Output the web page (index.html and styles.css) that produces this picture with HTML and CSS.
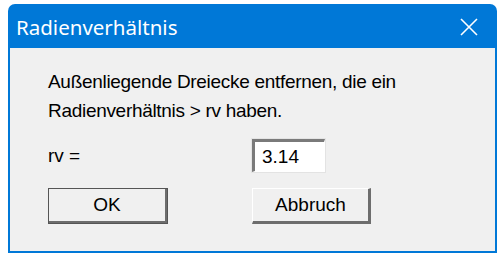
FILE: index.html
```html
<!DOCTYPE html>
<html lang="de">
<head>
  <meta charset="UTF-8" />
  <title>Radienverhältnis</title>
  <link rel="stylesheet" href="styles.css">
</head>
<body>
  <div class="dialog">
    <div class="titlebar">
      <span class="title">Radienverhältnis</span>
      <svg class="close" width="18" height="18" viewBox="0 0 18 18">
        <path d="M1 1 L17 17 M17 1 L1 17" stroke="#fff" stroke-width="1.6" fill="none" />
      </svg>
    </div>
    <div class="dialog-body">
      <p class="msg">Außenliegende Dreiecke entfernen, die ein<br>Radienverhältnis &gt; rv haben.</p>
      <div class="row">
        <label for="rv">rv =</label>
        <input type="text" id="rv" value="3.14">
      </div>
      <div class="row buttons">
        <button class="btn default" type="button">OK</button>
        <button class="btn" type="button">Abbruch</button>
      </div>
    </div>
  </div>
</body>
</html>
```

FILE: styles.css
```css
/* Base */
* {
  margin: 0;
  padding: 0;
  box-sizing: border-box;
}
body {
  background: #fff;
  font-family: 'Liberation Sans', Arial, sans-serif;
  color: #000;
}
/* Dialog window */
.dialog {
  margin: 4px 0 0 8px;
  width: 489px;
  height: 249px;
  display: flex;
  flex-direction: column;
}
.titlebar {
  height: 44px;
  background: #0078d7;
  border-radius: 7px 7px 0 0;
  display: flex;
  align-items: center;
  justify-content: space-between;
  padding: 0 19px 0 8px;
}
.titlebar .title {
  color: #fff;
  font-family: 'Noto Sans', 'Open Sans', sans-serif;
  font-size: 20.5px;
  margin-top: 2px;
}
.titlebar .close {
  margin-top: 2px;
}
.dialog-body {
  flex: 1;
  background: #f0f0f0;
  border: 2px solid #0078d7;
  border-top: none;
  padding: 19px 0 0 38px;
}
.msg {
  font-size: 19px;
  line-height: 29px;
  letter-spacing: -0.3px;
}
/* Rows */
.row {
  display: grid;
  grid-template-columns: 204px auto;
  align-items: center;
  margin-top: 14px;
  font-size: 19px;
}
.row input {
  width: 73px;
  height: 33px;
  background: #fff;
  border-style: solid;
  border-width: 3px 1px 1px 3px;
  border-color: #7a7a7a #fff #fff #7a7a7a;
  outline: 1px solid #e3e3e3;
  font-family: 'Liberation Sans', Arial, sans-serif;
  font-size: 19px;
  padding: 0 0 0 7px;
}
.buttons {
  margin-top: 16px;
  grid-template-columns: 204px 120px;
}
.btn {
  height: 36px;
  background: #f0f0f0;
  font-family: 'Liberation Sans', Arial, sans-serif;
  font-size: 19px;
  border-style: solid;
  border-width: 1px 3px 3px 1px;
  border-color: #fff #6d6d6d #6d6d6d #fff;
}
.btn.default {
  width: 120px;
  outline: 1px solid #555;
  outline-offset: -1px;
}
.btn:last-child {
  width: 119px;
}
```
